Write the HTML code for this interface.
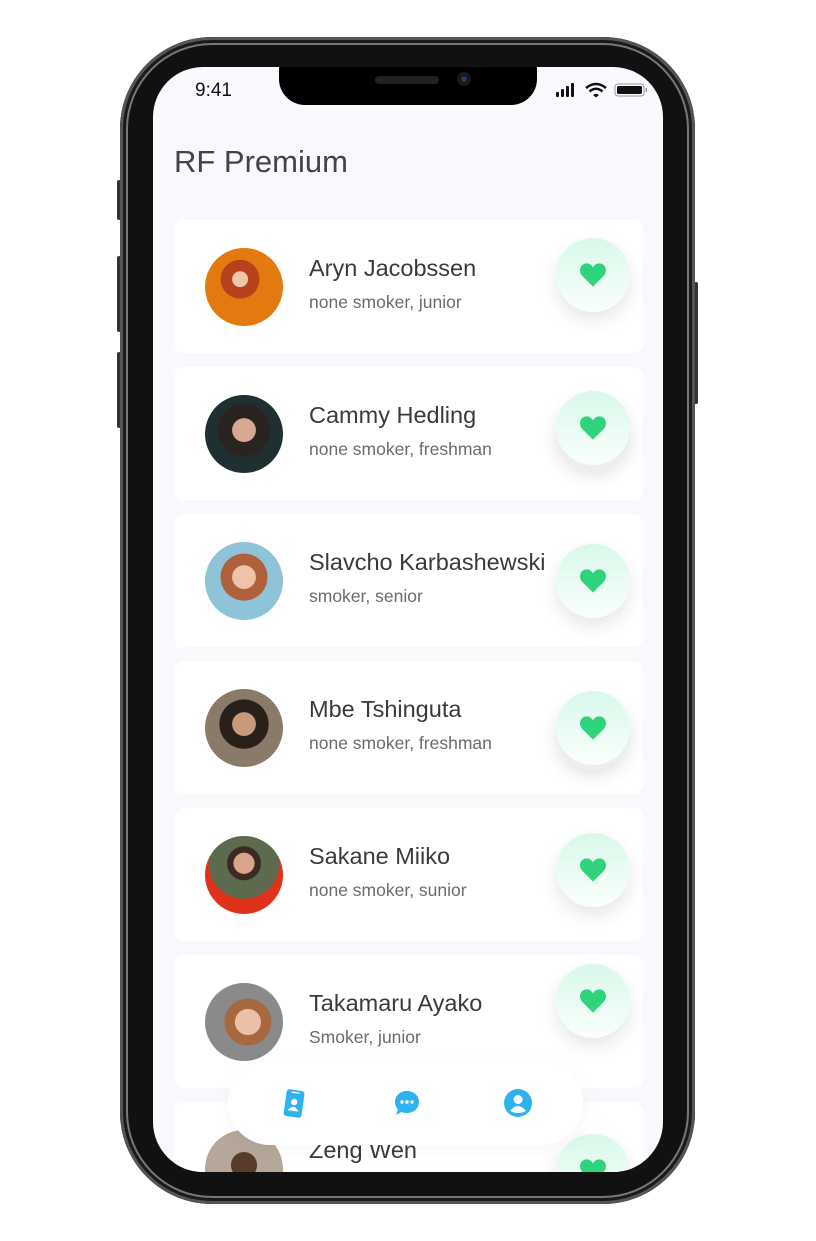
<!DOCTYPE html>
<html><head><meta charset="utf-8"><style>
*{margin:0;padding:0;box-sizing:border-box}
body{width:816px;height:1241px;background:#fff;position:relative;overflow:hidden;font-family:"Liberation Sans",sans-serif}
.body{position:absolute;left:120px;top:37px;width:575px;height:1167px;border-radius:92px;background:#111;box-shadow:inset 0 0 0 3px #555,inset 0 0 0 6px #1a1a1a,inset 0 0 0 8px #777}
.btn{position:absolute;background:#333;border-radius:2px}
.screen{position:absolute;left:153px;top:67px;width:510px;height:1105px;border-radius:50px;background:#f8f8fd;overflow:hidden}
.notch{position:absolute;left:126px;top:0;width:258px;height:38px;background:#000;border-radius:0 0 26px 26px}
.spk{position:absolute;left:96px;top:9px;width:64px;height:8px;border-radius:4px;background:#222}
.cam{position:absolute;left:178px;top:5px;width:14px;height:14px;border-radius:50%;background:#111;box-shadow:inset 0 0 0 3px #1a1a1a}
.cam:after{content:"";position:absolute;left:4px;top:4px;width:6px;height:6px;border-radius:50%;background:#1e3a6a}
.time{position:absolute;left:42px;top:13px;font-size:19px;color:#111}
h1{position:absolute;left:21px;top:77px;font-size:31px;font-weight:normal;color:#444}
.card{position:absolute;left:21px;width:469px;height:133px;background:#fff;border-radius:10px}
.av{position:absolute;left:31px;top:28px;width:78px;height:78px;border-radius:50%}
.nm{position:absolute;left:135px;top:35px;font-size:23.5px;color:#3a3a3a}
.sb{position:absolute;left:135px;top:72px;font-size:17.5px;color:#6b6b6b}
.hb{position:absolute;left:382px;width:74px;height:74px;border-radius:50%;background:linear-gradient(#d8f8ea,#fafffc);box-shadow:0 8px 18px rgba(0,0,0,.10)}
.hb svg{position:absolute;left:23px;top:24px}
.nav{position:absolute;left:75px;top:994px;width:355px;height:84px;border-radius:42px;background:#fff;box-shadow:0 4px 20px rgba(0,0,0,.04)}
.nav svg{position:absolute;top:27px}
</style></head><body>
<div class="btn" style="left:117px;top:180px;width:4px;height:40px"></div>
<div class="btn" style="left:117px;top:256px;width:4px;height:76px"></div>
<div class="btn" style="left:117px;top:352px;width:4px;height:76px"></div>
<div class="btn" style="left:694px;top:282px;width:4px;height:122px"></div>
<div class="body"></div>
<div class="screen">
<div class="notch"><div class="spk"></div><div class="cam"></div></div>
<div class="time">9:41</div>
<svg style="position:absolute;left:403px;top:15px" width="106" height="16" viewBox="0 0 106 16">
<rect x="0" y="10" width="3" height="5" rx="1" fill="#111"/><rect x="5" y="7" width="3" height="8" rx="1" fill="#111"/><rect x="10" y="4" width="3" height="11" rx="1" fill="#111"/><rect x="15" y="1" width="3" height="14" rx="1" fill="#111"/>
<path d="M30 6 Q40 -2 50 6" stroke="#111" stroke-width="2.5" fill="none"/><path d="M33.5 9.5 Q40 4 46.5 9.5" stroke="#111" stroke-width="2.5" fill="none"/><path d="M37 13 L40 15.5 L43 13 Q40 10.5 37 13Z" fill="#111"/>
<rect x="59" y="2" width="29" height="12" rx="3" fill="none" stroke="#999" stroke-width="1"/><rect x="61" y="4" width="25" height="8" rx="1.5" fill="#111"/><rect x="89.5" y="6" width="1.5" height="4" fill="#999"/>
</svg>
<h1>RF Premium</h1>

<div class="card" style="top:153px"><div class="av" style="background:radial-gradient(circle at 45% 40%,#f0c7a8 0 12%,#b5421c 13% 30%,#e27a10 31%)"></div><div class="nm">Aryn Jacobssen</div><div class="sb">none smoker, junior</div><div class="hb" style="top:18px"><svg width="28" height="26" viewBox="0 0 24 22"><path d="M12 21 L3 12 C-1 8 1 1 6.5 1 C9 1 11 2.5 12 4.5 C13 2.5 15 1 17.5 1 C23 1 25 8 21 12Z" fill="#2ed37c"/></svg></div></div>

<div class="card" style="top:300px"><div class="av" style="background:radial-gradient(circle at 50% 45%,#d9a893 0 20%,#2a2420 21% 45%,#1f2f32 46%)"></div><div class="nm">Cammy Hedling</div><div class="sb">none smoker, freshman</div><div class="hb" style="top:24px;box-shadow:0 6px 0 #eee,0 10px 18px rgba(0,0,0,.12)"><svg width="28" height="26" viewBox="0 0 24 22"><path d="M12 21 L3 12 C-1 8 1 1 6.5 1 C9 1 11 2.5 12 4.5 C13 2.5 15 1 17.5 1 C23 1 25 8 21 12Z" fill="#2ed37c"/></svg></div></div>

<div class="card" style="top:447px"><div class="av" style="background:radial-gradient(circle at 50% 45%,#efc3a8 0 20%,#b0603a 21% 40%,#8fc3d8 41%)"></div><div class="nm">Slavcho Karbashewski</div><div class="sb">smoker, senior</div><div class="hb" style="top:30px"><svg width="28" height="26" viewBox="0 0 24 22"><path d="M12 21 L3 12 C-1 8 1 1 6.5 1 C9 1 11 2.5 12 4.5 C13 2.5 15 1 17.5 1 C23 1 25 8 21 12Z" fill="#2ed37c"/></svg></div></div>

<div class="card" style="top:594px"><div class="av" style="background:radial-gradient(circle at 50% 45%,#c79a7e 0 20%,#2a201a 21% 42%,#8a7a6a 43%)"></div><div class="nm">Mbe Tshinguta</div><div class="sb">none smoker, freshman</div><div class="hb" style="top:30px;box-shadow:0 5px 0 #eee,0 10px 18px rgba(0,0,0,.12)"><svg width="28" height="26" viewBox="0 0 24 22"><path d="M12 21 L3 12 C-1 8 1 1 6.5 1 C9 1 11 2.5 12 4.5 C13 2.5 15 1 17.5 1 C23 1 25 8 21 12Z" fill="#2ed37c"/></svg></div></div>

<div class="card" style="top:741px"><div class="av" style="background:radial-gradient(circle at 50% 35%,#d8a58a 0 16%,#3a2a22 17% 26%,#5d6a4e 27% 55%,#e0321a 56%)"></div><div class="nm">Sakane Miiko</div><div class="sb">none smoker, sunior</div><div class="hb" style="top:25px"><svg width="28" height="26" viewBox="0 0 24 22"><path d="M12 21 L3 12 C-1 8 1 1 6.5 1 C9 1 11 2.5 12 4.5 C13 2.5 15 1 17.5 1 C23 1 25 8 21 12Z" fill="#2ed37c"/></svg></div></div>

<div class="card" style="top:888px"><div class="av" style="background:radial-gradient(circle at 55% 50%,#eac0a8 0 22%,#a6683e 23% 40%,#8a8a8a 41%)"></div><div class="nm">Takamaru Ayako</div><div class="sb">Smoker, junior</div><div class="hb" style="top:9px"><svg width="28" height="26" viewBox="0 0 24 22"><path d="M12 21 L3 12 C-1 8 1 1 6.5 1 C9 1 11 2.5 12 4.5 C13 2.5 15 1 17.5 1 C23 1 25 8 21 12Z" fill="#2ed37c"/></svg></div></div>

<div class="card" style="top:1035px"><div class="av" style="background:radial-gradient(circle at 50% 45%,#5a3a2a 0 22%,#b5a89a 23%)"></div><div class="nm">Zeng Wen</div><div class="hb" style="top:32px"><svg width="28" height="26" viewBox="0 0 24 22"><path d="M12 21 L3 12 C-1 8 1 1 6.5 1 C9 1 11 2.5 12 4.5 C13 2.5 15 1 17.5 1 C23 1 25 8 21 12Z" fill="#2ed37c"/></svg></div></div>

<div class="nav">
<svg style="left:52px" width="28" height="32" viewBox="0 0 28 32"><g transform="rotate(8 14 16)"><rect x="5" y="2" width="18" height="27" rx="3" fill="#2eb3ee"/><rect x="10" y="4" width="8" height="1.2" fill="#fff"/><circle cx="14" cy="14" r="3.2" fill="#fff"/><path d="M8.5 23 Q14 15 19.5 23Z" fill="#fff"/></g></svg>
<svg style="left:164px" width="30" height="30" viewBox="0 0 30 30"><path d="M15 3 C22 3 27 8 27 14 C27 20 22 25 15 25 C13 25 11 24.5 9.5 24 L4 27 L6 21.5 C4 19.5 3 17 3 14 C3 8 8 3 15 3Z" fill="#2eb3ee"/><circle cx="10" cy="14" r="1.7" fill="#fff"/><circle cx="15" cy="14" r="1.7" fill="#fff"/><circle cx="20" cy="14" r="1.7" fill="#fff"/></svg>
<svg style="left:275px" width="30" height="30" viewBox="0 0 30 30"><circle cx="15" cy="15" r="14" fill="#2eb3ee"/><circle cx="15" cy="11.5" r="4.5" fill="#fff"/><path d="M7 23 Q15 13 23 23 Q15 27 7 23Z" fill="#fff"/></svg>
</div>
</div>
</body></html>
